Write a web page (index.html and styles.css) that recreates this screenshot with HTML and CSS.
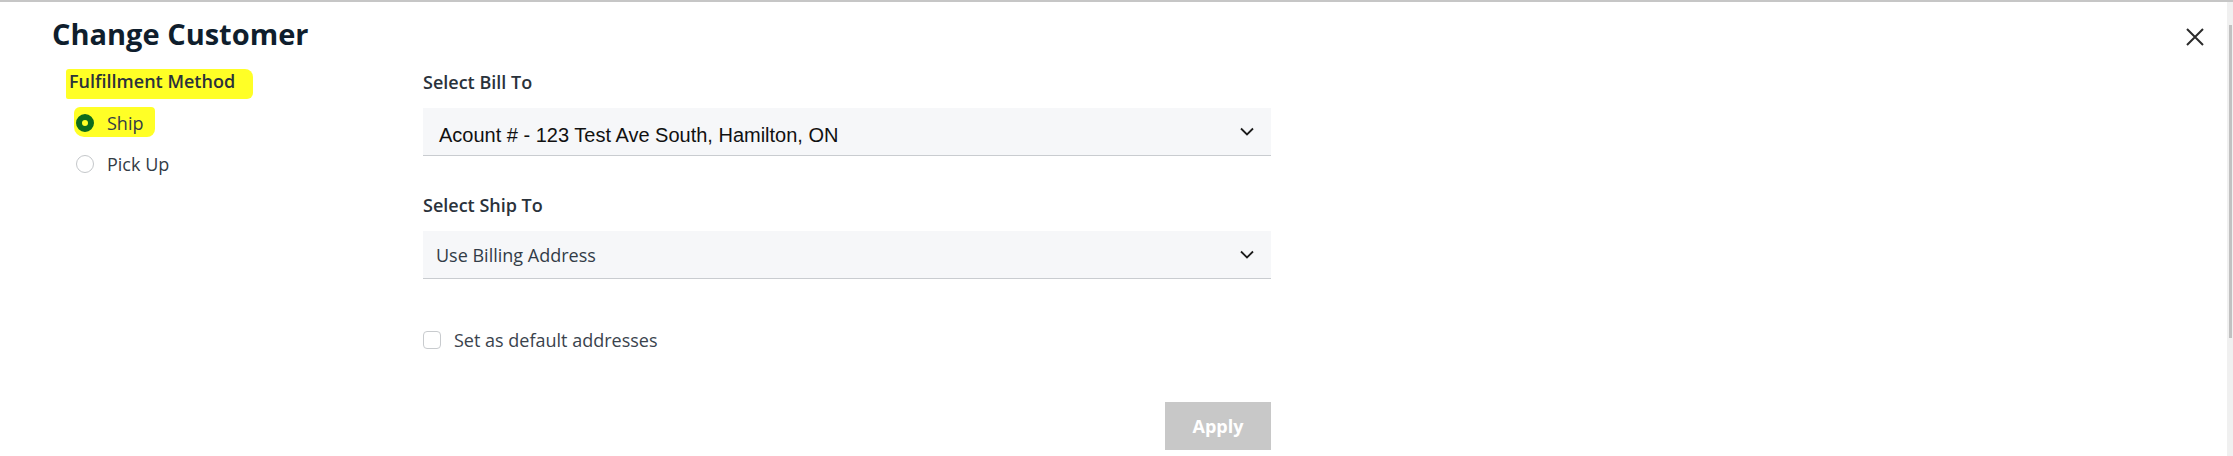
FILE: index.html
```html
<!DOCTYPE html>
<html>
<head>
    <title>Change Customer</title>
    <link rel="stylesheet" href="styles.css">
</head>
<body>
    <div class="modal">
        <div class="modal-body">
            <header class="modal-head">
                <h1>Change Customer</h1>
                <button class="close" aria-label="Close">
                    <svg width="18" height="18" viewBox="0 0 18 18">
                        <path d="M1 1 L17 17 M17 1 L1 17" stroke="#2b2b2b" stroke-width="2" fill="none"/>
                    </svg>
                </button>
            </header>

            <div class="modal-content">
                <section class="fulfillment">
                    <h3><span class="marker">Fulfillment Method</span></h3>
                    <div class="radio-list">
                        <label class="radio-row marked">
                            <span class="radio checked"></span>
                            <span>Ship</span>
                        </label>
                        <label class="radio-row">
                            <span class="radio"></span>
                            <span>Pick Up</span>
                        </label>
                    </div>
                </section>

                <form class="address-form">
                    <div class="field">
                        <label class="field-label">Select Bill To</label>
                        <div class="select">
                            <span class="select-value pasted">Acount # - 123 Test Ave South, Hamilton, ON</span>
                            <svg class="chevron" width="14" height="9" viewBox="0 0 14 9">
                                <path d="M1 1.5 L7 7.5 L13 1.5" stroke="#1c1c1c" stroke-width="1.8" fill="none"/>
                            </svg>
                        </div>
                    </div>

                    <div class="field">
                        <label class="field-label">Select Ship To</label>
                        <div class="select">
                            <span class="select-value">Use Billing Address</span>
                            <svg class="chevron" width="14" height="9" viewBox="0 0 14 9">
                                <path d="M1 1.5 L7 7.5 L13 1.5" stroke="#1c1c1c" stroke-width="1.8" fill="none"/>
                            </svg>
                        </div>
                    </div>

                    <label class="check-row">
                        <span class="checkbox"></span>
                        <span>Set as default addresses</span>
                    </label>

                    <div class="actions">
                        <button type="button" class="apply" disabled>Apply</button>
                    </div>
                </form>
            </div>
        </div>

        <div class="scrollbar"><div class="thumb"></div></div>
    </div>
</body>
</html>
```

FILE: styles.css
```css
html, body {
    margin: 0;
    padding: 0;
    background: #fff;
}
body {
    font-family: "Open Sans", "Liberation Sans", sans-serif;
    color: #26303a;
}
.modal {
    display: flex;
    width: 2233px;
    height: 456px;
    box-sizing: border-box;
    border-top: 2px solid #c6c6c6;
    overflow: hidden;
}
.modal-body {
    flex: 1;
    padding-left: 52px;
    padding-right: 23px;
}
.modal-head {
    display: flex;
    justify-content: space-between;
    align-items: flex-start;
    padding-top: 13px;
}
.modal-head h1 {
    margin: 0;
    font-size: 29px;
    line-height: 38px;
    font-weight: 700;
    color: #0f1e2d;
}
.close {
    background: none;
    border: 0;
    padding: 0;
    margin-top: 13px;
    width: 18px;
    height: 18px;
    cursor: pointer;
}
.close svg {
    display: block;
}

.modal-content {
    display: flex;
    margin-top: 16px;
    padding-left: 17px;
}
.fulfillment {
    width: 354px;
    flex-shrink: 0;
}
.fulfillment h3 {
    margin: 0;
    font-size: 18px;
    line-height: 24px;
    font-weight: 600;
    color: #2a323b;
}
.marker {
    display: inline-block;
    background: #ffff26;
    padding: 0 18px 6px 3px;
    margin: 0 -18px -6px -3px;
    border-radius: 3px 8px 6px 2px;
}
.radio-list {
    display: flex;
    flex-direction: column;
    gap: 17px;
    margin-top: 18px;
    margin-left: 7px;
}
.radio-row {
    display: flex;
    align-items: center;
    gap: 13px;
    width: fit-content;
    font-size: 18px;
    line-height: 24px;
    color: #333c46;
}
.radio-row.marked {
    background: #ffff26;
    padding: 4px 12px 2px 2px;
    margin: -4px -12px -2px -2px;
    border-radius: 6px 4px 8px 10px;
}
.radio {
    width: 18px;
    height: 18px;
    box-sizing: border-box;
    border-radius: 50%;
    border: 1px solid #c4c7ca;
    background: #fff;
}
.radio.checked {
    border: 6px solid #0d6b1c;
    background: transparent;
}

.address-form {
    display: flex;
    flex-direction: column;
    width: 848px;
    padding-top: 1px;
}
.field {
    display: flex;
    flex-direction: column;
    gap: 14px;
}
.field + .field {
    margin-top: 37px;
}
.field-label {
    font-size: 18px;
    line-height: 24px;
    font-weight: 600;
    color: #2a323b;
}
.select {
    display: flex;
    align-items: center;
    justify-content: space-between;
    height: 47px;
    padding: 0 17px 0 13px;
    background: #f6f7f9;
    border-bottom: 1px solid #c9ccd0;
}
.select-value {
    font-size: 18px;
    line-height: 24px;
    color: #323c47;
}
.select-value.pasted {
    font-family: "Liberation Sans", Arial, sans-serif;
    font-size: 20px;
    color: #111;
    margin-top: 6px;
    margin-left: 3px;
}
.chevron {
    display: block;
}
.check-row {
    display: flex;
    align-items: center;
    gap: 13px;
    margin-top: 49px;
    font-size: 18px;
    line-height: 24px;
    color: #3a434d;
}
.checkbox {
    width: 18px;
    height: 18px;
    box-sizing: border-box;
    border: 1px solid #c8cbce;
    border-radius: 4px;
    background: #fff;
}
.actions {
    display: flex;
    justify-content: flex-end;
    margin-top: 50px;
}
.apply {
    width: 106px;
    height: 48px;
    border: 0;
    background: #c8c8c8;
    color: #fff;
    font-family: "Open Sans", sans-serif;
    font-size: 18px;
    font-weight: 700;
}

.scrollbar {
    width: 6px;
    flex-shrink: 0;
    background: #f0f0f0;
    padding: 23px 1px 0 2px;
    box-sizing: border-box;
}
.thumb {
    height: 313px;
    background: #c1c1c1;
}
```
